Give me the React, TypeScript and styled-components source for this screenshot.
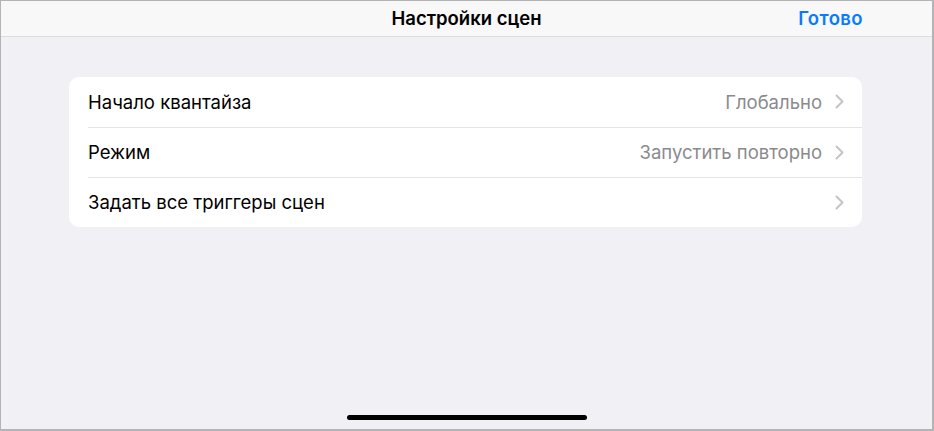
import React from "react";
import styled, { createGlobalStyle } from "styled-components";

const GlobalStyle = createGlobalStyle`
    html, body {
        margin: 0;
        padding: 0;
        background: #ffffff;
    }
    body {
        font-family: Inter, "Noto Sans", sans-serif;
        -webkit-font-smoothing: antialiased;
    }
`;

const Screen = styled.main`
    width: 934px;
    height: 431px;
    box-sizing: border-box;
    border: 1px solid #b4b4b6;
    border-right-width: 2px;
    border-bottom-width: 2px;
    background: #f1f0f5;
    display: flex;
    flex-direction: column;
    overflow: hidden;
`;

const NavBar = styled.header`
    height: 34px;
    flex: none;
    background: #f8f8f9;
    border-bottom: 1px solid #dcdcde;
    display: grid;
    grid-template-columns: 1fr auto 1fr;
    align-items: center;
    padding: 0 69px 1px 69px;
`;

const Title = styled.h1`
    grid-column: 2;
    margin: 0;
    font-size: 18.5px;
    font-weight: 600;
    color: #000;
`;

const Done = styled.button`
    grid-column: 3;
    justify-self: end;
    border: none;
    background: none;
    padding: 0;
    font-family: inherit;
    font-size: 18.5px;
    font-weight: 600;
    letter-spacing: 0.4px;
    color: #0a7aff;
`;

const Content = styled.section`
    flex: 1;
    display: flex;
    flex-direction: column;
    padding: 40px 70px 0 68px;
`;

const Card = styled.ul`
    list-style: none;
    margin: 0;
    padding: 0;
    background: #fff;
    border-radius: 10px;
    overflow: hidden;
`;

const Row = styled.li`
    height: 50px;
    display: flex;
    align-items: center;
    padding-left: 19px;
    &:not(:first-child) > div {
        border-top: 1px solid #e4e4e6;
    }
`;

const RowInner = styled.div`
    flex: 1;
    height: 100%;
    box-sizing: border-box;
    display: flex;
    align-items: center;
    padding-right: 18px;
    padding-bottom: 1px;
`;

const Label = styled.span`
    flex: 1;
    font-size: 18.5px;
    color: #000;
`;

const Value = styled.span`
    font-size: 18.5px;
    color: #8a8a8e;
    margin-right: 13px;
`;

const Chevron = () => (
    <svg width="9" height="15" viewBox="0 0 9 15" fill="none">
        <path d="M1.5 1.5L7.5 7.5L1.5 13.5" stroke="#c4c4c7" strokeWidth="2" strokeLinecap="round" strokeLinejoin="round" />
    </svg>
);

const Footer = styled.div`
    flex: none;
    height: 14px;
    display: flex;
    justify-content: center;
`;

const HomeIndicator = styled.div`
    width: 240px;
    height: 5px;
    border-radius: 3px;
    background: #000;
`;

const rows = [
    { label: "Начало квантайза", value: "Глобально" },
    { label: "Режим", value: "Запустить повторно" },
    { label: "Задать все триггеры сцен", value: "" },
];

const App: React.FC = () => {
    return (
        <>
            <GlobalStyle />
            <Screen>
                <NavBar>
                    <Title>Настройки сцен</Title>
                    <Done>Готово</Done>
                </NavBar>
                <Content>
                    <Card>
                        {rows.map((r) => (
                            <Row key={r.label}>
                                <RowInner>
                                    <Label>{r.label}</Label>
                                    {r.value && <Value>{r.value}</Value>}
                                    <Chevron />
                                </RowInner>
                            </Row>
                        ))}
                    </Card>
                </Content>
                <Footer>
                    <HomeIndicator />
                </Footer>
            </Screen>
        </>
    );
};

export default App;
